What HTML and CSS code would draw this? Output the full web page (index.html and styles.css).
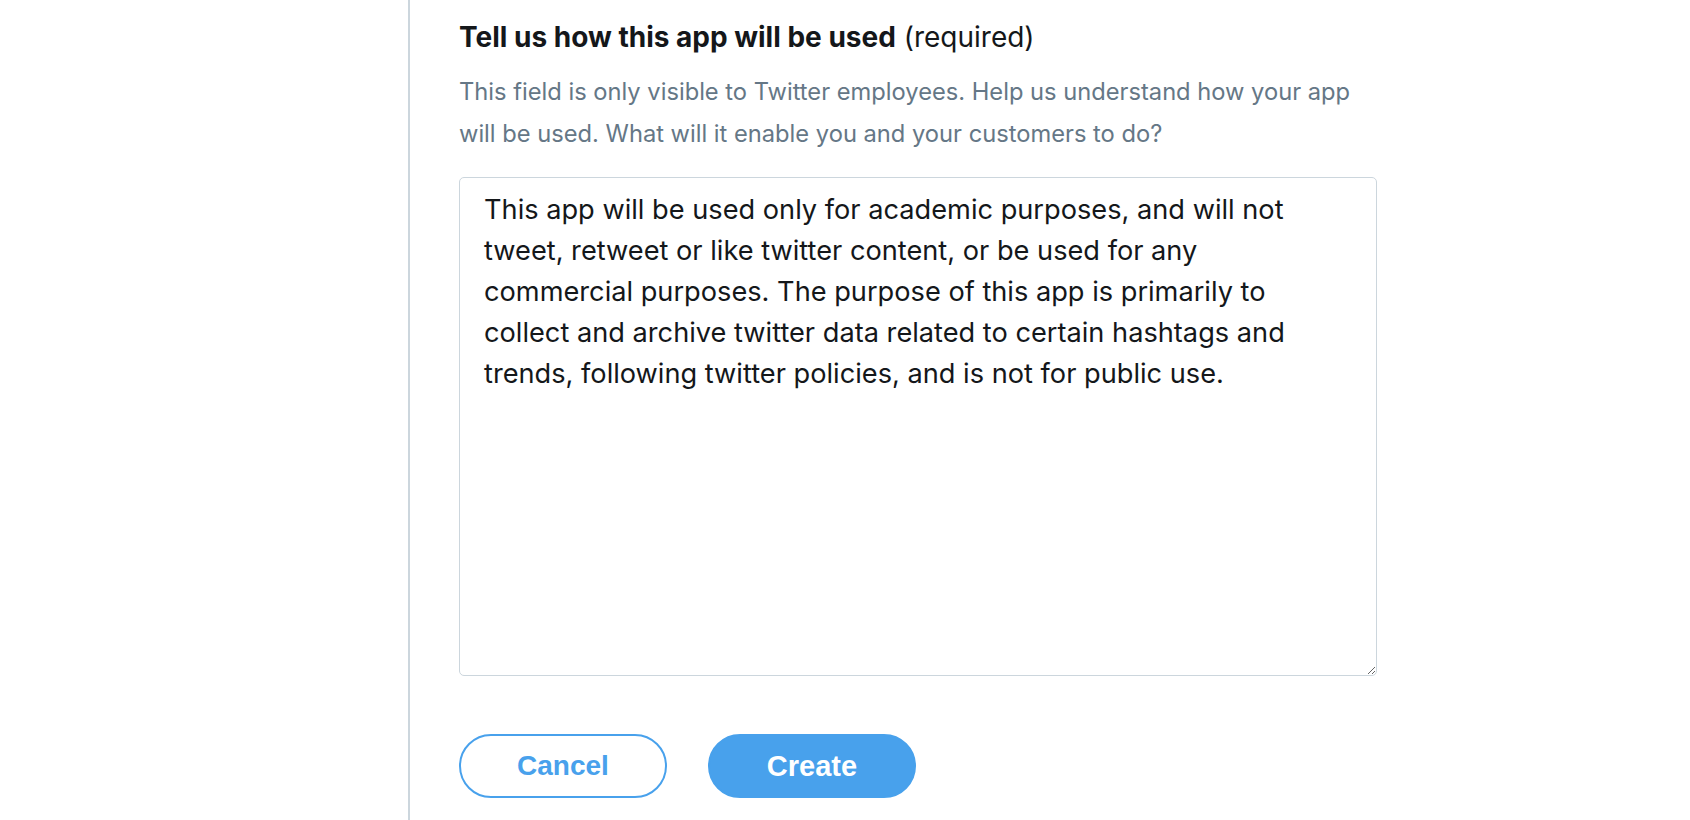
FILE: index.html
```html
<!DOCTYPE html>
<html lang="en">
<head>
<meta charset="utf-8">
<title>Create app</title>
<link rel="stylesheet" href="styles.css">
</head>
<body>
<div class="page">
  <aside class="sidebar"></aside>
  <main class="main">
    <form class="field">
      <h2 class="label"><span class="label-strong">Tell us how this app will be used</span> (required)</h2>
      <p class="help">This field is only visible to Twitter employees. Help us understand how your app will be used. What will it enable you and your customers to do?</p>
      <textarea class="input" spellcheck="false">This app will be used only for academic purposes, and will not
tweet, retweet or like twitter content, or be used for any
commercial purposes. The purpose of this app is primarily to
collect and archive twitter data related to certain hashtags and
trends, following twitter policies, and is not for public use.</textarea>
      <div class="actions">
        <button type="button" class="btn btn-outline">Cancel</button>
        <button type="button" class="btn btn-primary">Create</button>
      </div>
    </form>
  </main>
</div>
</body>
</html>
```
FILE: styles.css
```css
html, body {
  margin: 0;
  padding: 0;
  background: #ffffff;
}
body {
  font-family: Inter, "Noto Sans", "Liberation Sans", sans-serif;
  color: #14171a;
}
.page {
  display: flex;
  min-height: 820px;
}
.sidebar {
  width: 408px;
  flex: none;
}
.main {
  flex: 1;
  border-left: 2px solid #ccd6dd;
  padding: 20px 0 0 49px;
}
.field {
  width: 918px;
  margin: 0;
}
.label {
  margin: 0;
  font-size: 28px;
  line-height: 35px;
  font-weight: 400;
  color: #14171a;
}
.label-strong {
  font-weight: 700;
}
.help {
  margin: 16px 0 0 0;
  width: 915px;
  font-size: 23.7px;
  line-height: 42px;
  color: #657786;
}
.input {
  display: block;
  box-sizing: border-box;
  width: 918px;
  height: 499px;
  margin: 22px 0 0 0;
  padding: 11px 12px 10px 24px;
  border: 1px solid #ccd6dd;
  border-radius: 5px;
  font-family: Inter, "Noto Sans", "Liberation Sans", sans-serif;
  font-size: 27.2px;
  line-height: 41px;
  color: #14171a;
  background: #ffffff;
  white-space: pre-wrap;
  outline: none;
}
.actions {
  display: flex;
  gap: 41px;
  margin-top: 58px;
}
.btn {
  box-sizing: border-box;
  width: 208px;
  height: 64px;
  border-radius: 32px;
  font-family: "Liberation Sans", Arial, sans-serif;
  font-weight: 700;
  font-size: 28px;
  cursor: pointer;
}
.btn-outline {
  background: #ffffff;
  color: #48a1ec;
  border: 2px solid #48a1ec;
}
.btn-primary {
  background: #48a1ec;
  color: #ffffff;
  border: 2px solid #48a1ec;
  font-size: 29px;
}
```
